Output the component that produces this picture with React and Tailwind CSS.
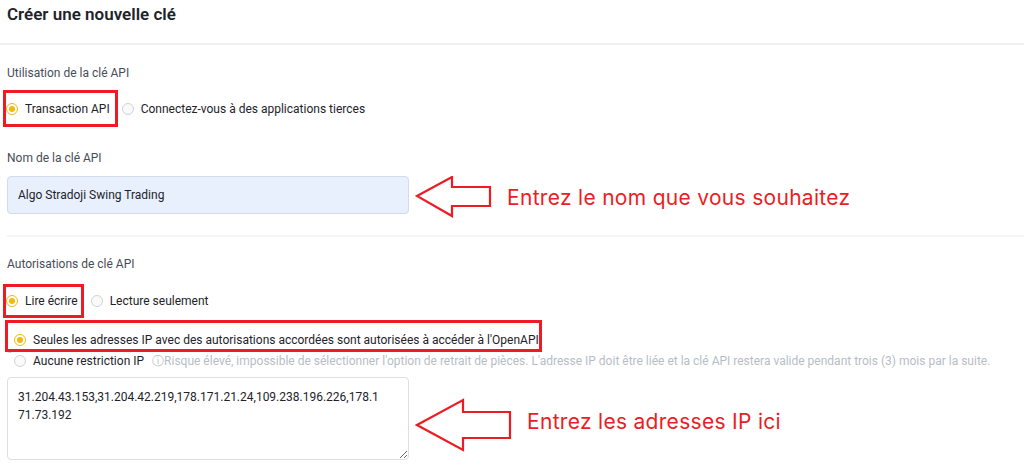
import React from "react";

function Radio({ checked }) {
  return (
    <span
      className={`flex h-[12px] w-[12px] shrink-0 items-center justify-center rounded-full border ${
        checked ? "border-[#f0b90b]" : "border-[#cfd3d8] bg-[#fafafa]"
      }`}
    >
      {checked && <span className="h-[6px] w-[6px] rounded-full bg-[#f0b90b]" />}
    </span>
  );
}

function Option({ checked, children, className = "" }) {
  return (
    <label className={`flex items-center gap-[7px] leading-[18px] ${className}`}>
      <Radio checked={checked} />
      <span className="whitespace-nowrap">{children}</span>
    </label>
  );
}

function ArrowLeft({ w, h, d }) {
  return (
    <svg width={w} height={h} viewBox={`0 0 ${w} ${h}`} className="block shrink-0">
      <path d={d} fill="none" stroke="#ed1c24" strokeWidth="2.2" strokeLinejoin="miter" />
    </svg>
  );
}

function Hint({ children, className = "" }) {
  return (
    <span
      className={`whitespace-nowrap font-['Inter',sans-serif] text-[21px] leading-[28px] tracking-[0.3px] text-[#ed1c24] ${className}`}
    >
      {children}
    </span>
  );
}

export default function App() {
  return (
    <div className="relative h-[472px] w-[1024px] overflow-hidden bg-white font-['Roboto',sans-serif] text-[12px] text-[#1e2329]">
      <div className="h-[45px] border-b-2 border-[#eef0f2] px-[7px] pt-[3px]">
        <h1 className="text-[17px] font-semibold leading-[22px]">Créer une nouvelle clé</h1>
      </div>

      <div className="pl-[7px]">
        <p className="mt-[19px] leading-[18px] text-[#474d57]">Utilisation de la clé API</p>
        <div className="mt-[8px] flex items-center">
          <div className="-ml-[4px] flex h-[37px] items-center border-[3px] border-[#ed1c24] pr-[5px]">
            <Option checked>Transaction API</Option>
          </div>
          <Option className="ml-[4px]">Connectez-vous à des applications tierces</Option>
        </div>

        <p className="mt-[22px] leading-[18px] text-[#474d57]">Nom de la clé API</p>
        <div className="mt-[9px] flex items-start">
          <div className="flex h-[38px] w-[402px] items-center rounded-[4px] border border-[#d5dce8] bg-[#e8f0fe] px-[10px]">
            Algo Stradoji Swing Trading
          </div>
          <div className="ml-[6px]">
            <ArrowLeft w={77} h={42} d="M2 20 L37 1 L37 11 L75 11 L75 30 L37 30 L37 40 Z" />
          </div>
          <Hint className="ml-[15px] mt-[8px]">Entrez le nom que vous souhaitez</Hint>
        </div>

        <div className="mt-[17px] h-[2px] bg-[#f5f5f5]" />

        <p className="mt-[18px] leading-[18px] text-[#474d57]">Autorisations de clé API</p>
        <div className="mt-[11px] flex items-center">
          <div className="-ml-[4px] flex h-[34px] items-center border-[3px] border-[#ed1c24] pr-[3px]">
            <Option checked>Lire écrire</Option>
          </div>
          <Option className="ml-[7px]">Lecture seulement</Option>
        </div>

        <div className="relative -ml-[2px] mt-[2px] h-[32px] w-[537px] border-[3px] border-[#ed1c24] pl-[6px] pt-[8px]">
          <Option checked>Seules les adresses IP avec des autorisations accordées sont autorisées à accéder à l'OpenAPI</Option>
          <span className="absolute -bottom-[9px] left-[0px] text-[9px] leading-[10px] text-[#ed1c24]">*</span>
        </div>
        <div className="ml-[7px] flex items-center">
          <Option>Aucune restriction IP</Option>
          <span className="ml-[8px] whitespace-nowrap text-[12px] leading-[18px] text-[#b7bdc6]">
            ⓘRisque élevé, impossible de sélectionner l'option de retrait de pièces. L'adresse IP doit être liée et la clé API restera valide pendant trois (3) mois par la suite.
          </span>
        </div>

        <div className="mt-[7px] flex items-start">
          <textarea
            readOnly
            wrap="off"
            value={"31.204.43.153,31.204.42.219,178.171.21.24,109.238.196.226,178.1\n71.73.192"}
            className="h-[83px] w-[402px] resize-y overflow-hidden rounded-[4px] border border-[#dcdfe5] bg-white px-[10px] pt-[10px] text-[12px] leading-[18px] text-[#1e2329] outline-none"
          />
          <div className="ml-[6px] mt-[21px]">
            <ArrowLeft w={97} h={54} d="M2 27 L48 2 L48 14 L95 14 L95 40 L48 40 L48 52 Z" />
          </div>
          <Hint className="ml-[15px] mt-[31px]">Entrez les adresses IP ici</Hint>
        </div>
      </div>
    </div>
  );
}
